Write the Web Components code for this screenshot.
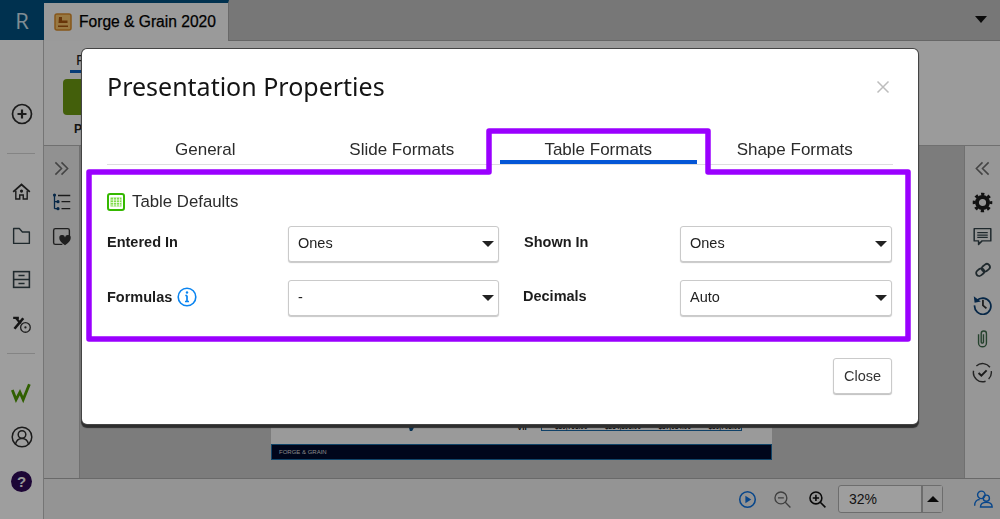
<!DOCTYPE html>
<html lang="en">
<head>
<meta charset="utf-8">
<title>Presentation Properties</title>
<style>
  html, body { margin: 0; height: 100%; overflow: hidden; }
  body { font-family: "Liberation Sans", Arial, sans-serif; }
</style>
</head>
<body>
<app-shell>
  <side-rail slot="rail">
    <app-icon name="plus" size="24"></app-icon>
    <rail-sep></rail-sep>
    <app-icon name="home"></app-icon>
    <app-icon name="folder"></app-icon>
    <app-icon name="archive"></app-icon>
    <app-icon name="percent"></app-icon>
    <rail-sep class="second"></rail-sep>
    <app-icon name="wmark"></app-icon>
    <app-icon name="user" size="24"></app-icon>
    <app-icon name="help"></app-icon>
  </side-rail>
  <tool-panel slot="left">
    <app-icon name="chevrons-right" tight></app-icon>
    <app-icon name="outline" tight></app-icon>
    <app-icon name="heartnote" tight></app-icon>
  </tool-panel>
  <tool-panel slot="right">
    <app-icon name="chevrons-left" tight></app-icon>
    <app-icon name="gear" tight></app-icon>
    <app-icon name="comment" tight></app-icon>
    <app-icon name="link" size="18" tight></app-icon>
    <app-icon name="history" tight></app-icon>
    <app-icon name="clip" tight></app-icon>
    <app-icon name="check" tight></app-icon>
  </tool-panel>
</app-shell>
<props-dialog>
  <dialog-tab-item>General</dialog-tab-item>
  <dialog-tab-item>Slide Formats</dialog-tab-item>
  <dialog-tab-item active>Table Formats</dialog-tab-item>
  <dialog-tab-item>Shape Formats</dialog-tab-item>
</props-dialog>

<script>
const ICONS = {
  plus: '<circle cx="12" cy="12" r="9.5" fill="none" stroke="#2c2c2c" stroke-width="1.7"/><path d="M12 7.5v9M7.5 12h9" stroke="#2c2c2c" stroke-width="2.2"/>',
  home: '<path d="M2.5 12.5 12 4l9.5 8.5" fill="none" stroke="#2c2c2c" stroke-width="2"/><path d="M5.5 11v9.5H10V16h4v4.500h4.500V11" fill="none" stroke="#2c2c2c" stroke-width="1.6"/><circle cx="12" cy="11.5" r="1.8" fill="#2c2c2c"/>',
  folder: '<path d="M3 4h6.500l3.500 4h8V21H3z" fill="none" stroke="#33434a" stroke-width="1.6" stroke-linejoin="round"/>',
  archive: '<rect x="3" y="3" width="18" height="18" fill="none" stroke="#33434a" stroke-width="1.8"/><path d="M3 12h18M8.500 7.500h7M8.500 16.500h7" stroke="#33434a" stroke-width="1.8"/>',
  percent: '<path d="M4 18 14 6" stroke="#222" stroke-width="3"/><path d="M2.500 5.500h6.500M6 6l5 6" stroke="#222" stroke-width="2.6"/><circle cx="16.500" cy="16.500" r="5.500" fill="none" stroke="#333" stroke-width="1.5"/><circle cx="16.500" cy="16.500" r="1.300" fill="#333"/>',
  wmark: '<path d="M1.500 8 5.800 19 10.200 10.500 13.900 19 21 1.500" fill="none" stroke="#4e9a00" stroke-width="3.2" stroke-linejoin="miter"/>',
  user: '<circle cx="12" cy="12" r="9.800" fill="none" stroke="#2c2c2c" stroke-width="1.500"/><circle cx="12" cy="9.500" r="3.800" fill="none" stroke="#2c2c2c" stroke-width="1.500"/><path d="M5.500 19c1-4 3.500-5.500 6.500-5.500s5.500 1.500 6.500 5.500" fill="none" stroke="#2c2c2c" stroke-width="1.500"/>',
  'chevrons-right': '<path d="M5 5l7 7-7 7M12 5l7 7-7 7" fill="none" stroke="#6e6e6e" stroke-width="1.800"/>',
  'chevrons-left': '<path d="M12 5l-7 7 7 7M19 5l-7 7 7 7" fill="none" stroke="#6e6e6e" stroke-width="1.800"/>',
  outline: '<path d="M4 3v16M4 11h4M4 19h4" fill="none" stroke="#0b3f73" stroke-width="1.500"/><circle cx="4" cy="3.500" r="1.800" fill="#0b3f73"/><circle cx="8" cy="11" r="1.800" fill="#0b3f73"/><circle cx="8" cy="19" r="1.800" fill="#0b3f73"/><path d="M8 4h14M12 11h10M12 19h10" stroke="#2c2c2c" stroke-width="1.500"/>',
  heartnote: '<path d="M13 21H5a2 2 0 0 1-2-2V5a2 2 0 0 1 2-2h14a2 2 0 0 1 2 2v8" fill="none" stroke="#333" stroke-width="1.600"/><path d="M16 22c-4-3-6.500-5-6.500-8a3.200 3.200 0 0 1 6.500-1 3.200 3.200 0 0 1 6.500 1c0 3-2.500 5-6.500 8z" fill="#333"/>',
  gear: '<circle cx="12" cy="12" r="6.300" fill="none" stroke="#1d1d1d" stroke-width="4.400"/><circle cx="12" cy="12" r="9.500" fill="none" stroke="#1d1d1d" stroke-width="3.400" stroke-dasharray="3.700 3.760" stroke-dashoffset="1.850"/>',
  comment: '<path d="M2.500 3h19v14h-10l-4 4v-4h-5z" fill="none" stroke="#33434a" stroke-width="1.700" stroke-linejoin="round"/><path d="M6 7.500h12M6 10.300h12M6 13.100h12" stroke="#33434a" stroke-width="1.400"/>',
  link: '<g fill="none" stroke="#33434a" stroke-width="2.400" transform="rotate(-38 12 12)"><rect x="1.500" y="8" width="11.500" height="8" rx="4"/><rect x="11" y="8" width="11.500" height="8" rx="4"/></g>',
  history: '<path d="M5.500 7.500A9.300 9.300 0 1 1 3 13" fill="none" stroke="#0b3f73" stroke-width="2"/><path d="M2 2.500 3 10l7-1.500z" fill="#0b3f73"/><path d="M12.500 6.500v6.500l4 3.500" fill="none" stroke="#2c2c2c" stroke-width="2"/>',
  clip: '<path d="M7.500 7v10a4.500 4.500 0 0 0 9 0V6.500a3 3 0 0 0-6 0V16a1.300 1.300 0 0 0 2.600 0V7" fill="none" stroke="#3d6b4a" stroke-width="1.600"/>',
  check: '<path d="M5 4.500a10.500 10.500 0 0 1 15.500 1.500M22 10.500a10.500 10.500 0 0 1-3 9M15.500 22A10.500 10.500 0 0 1 1.800 10" fill="none" stroke="#3a3a3a" stroke-width="1.600"/><path d="M7.500 12.500l3.200 3 6-6" fill="none" stroke="#2c2c2c" stroke-width="2.200"/>',
  play: '<circle cx="12" cy="12" r="9.800" fill="none" stroke="#0e72e0" stroke-width="2"/><path d="M9.300 7.200v9.600l7.400-4.800z" fill="#0e72e0"/>',
  'zoom-out': '<circle cx="10" cy="10" r="7.500" fill="none" stroke="#666" stroke-width="1.700"/><path d="M6.300 10h7.400M15.500 15.500 22 22" stroke="#666" stroke-width="1.700"/>',
  'zoom-in': '<circle cx="10" cy="10" r="7.500" fill="none" stroke="#111" stroke-width="2"/><path d="M6 10h8M10 6v8M15.500 15.500 22 22" stroke="#111" stroke-width="2"/>',
  users: '<circle cx="10" cy="7" r="4.500" fill="none" stroke="#0e72e0" stroke-width="1.700"/><path d="M2 20c0-5 3-7.500 6-7.500" fill="none" stroke="#0e72e0" stroke-width="1.700"/><circle cx="16" cy="11" r="3.700" fill="none" stroke="#0e72e0" stroke-width="1.700"/><path d="M9 21.500c0-3.500 3-5.500 7-5.500s7 2 7 5.500z" fill="none" stroke="#0e72e0" stroke-width="1.700"/>'
};

class AppIcon extends HTMLElement {
  constructor() {
    super();
    this.attachShadow({ mode: 'open' });
  }
  connectedCallback() {
    const name = this.getAttribute('name');
    const size = this.getAttribute('size') || 21;
    const tight = this.hasAttribute('tight');
    let art = `<svg viewBox="0 0 24 24" width="${size}" height="${size}">${ICONS[name] || ''}</svg>`;
    if (name === 'help') {
      art = '<span class="help">?</span>';
    }
    this.shadowRoot.innerHTML = `
      <style>
        :host { display: flex; align-items: center; justify-content: center; height: ${tight ? 34 : 44}px; }
        svg { display: block; }
        .help { width: 21px; height: 21px; border-radius: 50%; background: #300a58; color: #f4f4f4;
          font: bold 15px/21px "Liberation Sans", Arial, sans-serif; text-align: center; }
      </style>
      ${art}`;
  }
}
customElements.define('app-icon', AppIcon);

class RailSep extends HTMLElement {
  constructor() {
    super();
    this.attachShadow({ mode: 'open' });
    this.shadowRoot.innerHTML = `
      <style>
        :host { display: block; height: 1px; margin: 17px 8px 15px 7px; background: #d6d6d6; }
        :host(.second) { margin: 8px 8px 17px 7px; }
      </style>`;
  }
}
customElements.define('rail-sep', RailSep);

class SideRail extends HTMLElement {
  constructor() {
    super();
    this.attachShadow({ mode: 'open' });
    this.shadowRoot.innerHTML = `
      <style>
        :host { display: block; box-sizing: border-box; width: 44px; padding-top: 52px; background: #fff; border-right: 1px solid #bdbdbd; }
      </style>
      <slot></slot>`;
  }
}
customElements.define('side-rail', SideRail);

class ToolPanel extends HTMLElement {
  constructor() {
    super();
    this.attachShadow({ mode: 'open' });
    this.shadowRoot.innerHTML = `
      <style>
        :host { display: block; box-sizing: border-box; width: 36px; padding-top: 5px; background: #ebebeb; border-right: 1px solid #b5b5b5; }
        :host([slot="right"]) { background: #f4f4f4; border-right: 0; border-left: 1px solid #b5b5b5; }
      </style>
      <slot></slot>`;
  }
}
customElements.define('tool-panel', ToolPanel);

class SlidePreview extends HTMLElement {
  constructor() {
    super();
    this.attachShadow({ mode: 'open' });
    this.shadowRoot.innerHTML = `
      <style>
        :host { display: flex; flex-direction: column; justify-content: flex-end; box-sizing: border-box; width: 501px; height: 282px; background: #f8f8f8; }
        .row { display: flex; align-items: flex-end; height: 8px; margin-bottom: 13px; font: bold 6.5px "Liberation Sans", Arial, sans-serif; color: #111; }
        .mark { width: 22px; height: 8px; margin-left: 129px; background: #0b4f86; clip-path: polygon(0 0, 100% 0, 65% 50%, 55% 100%, 45% 100%, 40% 50%); }
        .vii { margin-left: 95px; width: 24px; font-size: 8px; line-height: 7px; }
        .cells { display: flex; justify-content: space-between; box-sizing: border-box; width: 201px; height: 8px; padding-left: 13px; border: 1px solid #1a6aa8; border-top: 0; line-height: 7px; }
        .foot { box-sizing: border-box; height: 16px; padding-left: 7px; background: #000a2c; border: 1px solid #1b6ea8; color: #ddd; font: 6px/14px "Liberation Sans", Arial, sans-serif; }
      </style>
      <div class="row">
        <div class="mark"></div><div class="vii">VII</div>
        <div class="cells"><span>$89,763.00</span><span>$234,895.00</span><span>$87,984.00</span><span>$89,708.00</span></div>
      </div>
      <div class="foot">FORGE &amp; GRAIN</div>`;
  }
}
customElements.define('slide-preview', SlidePreview);

class AppShell extends HTMLElement {
  constructor() {
    super();
    this.attachShadow({ mode: 'open' });
    this.shadowRoot.innerHTML = `
      <style>
        :host { display: grid; grid-template-columns: 44px 1fr; grid-template-rows: 40px 1fr; width: 1000px; height: 519px; }
        .top { grid-column: 1 / 3; display: flex; background: #c0c0c0; }
        .brand { width: 44px; background: #005080; color: #cfe3ee; font: 22px/40px "Open Sans", sans-serif; text-align: center; }
        .tab { display: flex; align-items: center; gap: 7px; box-sizing: border-box; width: 185px; height: 41px; padding-left: 10px; background: #f8f8f8; border-top: 3px solid #005080; border-right: 1px solid #aaa; position: relative; color: #000; font: 15.6px "Liberation Sans", Arial, sans-serif; -webkit-text-stroke: .25px #000; }
        .caret { margin: 16px 13px 0 auto; width: 0; height: 0; border: 6px solid transparent; border-top: 7px solid #111; border-bottom: 0; }
        .main { display: flex; flex-direction: column; min-width: 0; }
        .ribbon { height: 106px; box-sizing: border-box; padding: 10px 0 0 19px; background: #fbfbfb; border-top: 1px solid #a5a5a5; border-bottom: 1px solid #b5b5b5; color: #222; font: 14px "Liberation Sans", Arial, sans-serif; }
        .ribbon .f { display: inline-block; padding: 0 1px 2px 6px; margin-left: 7px; border-bottom: 3px solid #0b5fc0; font-size: 15px; }
        .ribbon .btn { display: block; width: 38px; height: 36px; margin-top: 6px; background: #6c9a12; border-radius: 4px; }
        .ribbon .p { display: block; margin: 7px 0 0 11px; font-size: 12px; font-weight: bold; }
        .work { flex: 1; display: flex; min-height: 0; }
        .canvas { flex: 1; display: flex; align-items: flex-end; padding: 0 0 18px 191px; background: #c8c8c8; overflow: hidden; }
        .status { display: flex; align-items: center; box-sizing: border-box; height: 41px; padding-left: 686px; background: #efefef; border-top: 1px solid #aaa; }
        .status app-icon { width: 35px; height: auto; }
        .zoom { display: flex; margin-left: 3px; height: 28px; box-sizing: border-box; border: 1px solid #b0b0b0; border-radius: 3px; background: #fff; width: 105px; font: 14px/26px "Liberation Sans", Arial, sans-serif; color: #222; }
        .zoom .val { flex: 1; padding-left: 10px; border-right: 2px solid #b0b0b0; }
        .zoom .up { width: 19px; display: flex; align-items: center; justify-content: center; background: #f4f4f4; }
        .zoom .up i { width: 0; height: 0; border: 6px solid transparent; border-bottom: 6px solid #111; border-top: 0; }
        .status .who { margin-left: 22px; }
      </style>
      <div class="top">
        <div class="brand">R</div>
        <div class="tab">
          <svg width="18" height="18" viewBox="0 0 18 18">
            <rect x="1" y="1" width="16" height="16" rx="2" fill="#f5c26b" stroke="#d98b2a" stroke-width="1.5"/>
            <path d="M5 4h3v3.5h5.500V10H4.500zM4 12.500h10V14H4z" fill="#a8560f"/>
          </svg>
          Forge &amp; Grain 2020
        </div>
        <div class="caret"></div>
      </div>
      <slot name="rail"></slot>
      <div class="main">
        <div class="ribbon">
          <span class="f">F</span>
          <span class="btn"></span>
          <span class="p">P</span>
        </div>
        <div class="work">
          <slot name="left"></slot>
          <div class="canvas"><slide-preview></slide-preview></div>
          <slot name="right"></slot>
        </div>
        <div class="status">
          <app-icon name="play" size="19"></app-icon>
          <app-icon name="zoom-out" size="19"></app-icon>
          <app-icon name="zoom-in" size="19"></app-icon>
          <div class="zoom"><div class="val">32%</div><div class="up"><i></i></div></div>
          <app-icon class="who" name="users" size="20"></app-icon>
        </div>
      </div>`;
  }
}
customElements.define('app-shell', AppShell);

class DialogTabItem extends HTMLElement {
  constructor() {
    super();
    this.attachShadow({ mode: 'open' });
    this.shadowRoot.innerHTML = `
      <style>
        :host { display: block; text-align: center; font: 17px/40px "Liberation Sans", Arial, sans-serif; color: #2b2b2b; position: relative; }
        :host([active])::after { content: ""; position: absolute; left: 0; right: 0; top: 30px; height: 3.5px; background: #0456d6; }
      </style>
      <slot></slot>`;
  }
}
customElements.define('dialog-tab-item', DialogTabItem);

class FieldSelect extends HTMLElement {
  constructor() {
    super();
    this.attachShadow({ mode: 'open' });
    this.shadowRoot.innerHTML = `
      <style>
        :host { display: flex; align-items: center; justify-content: space-between; box-sizing: border-box; height: 36px; padding: 0 4px 2px 9px; background: #fff; border: 1px solid #cacaca; border-radius: 3px; box-shadow: 0 1px 1px #c8c8c8; font: 14.5px "Liberation Sans", Arial, sans-serif; color: #222; }
        i { width: 0; height: 0; margin-top: 2px; border: 6px solid transparent; border-top: 6px solid #222; border-bottom: 0; }
      </style>
      <span><slot></slot></span><i></i>`;
  }
}
customElements.define('field-select', FieldSelect);

class PropsDialog extends HTMLElement {
  constructor() {
    super();
    this.attachShadow({ mode: 'open' });
    this.shadowRoot.innerHTML = `
      <style>
        :host { position: fixed; inset: 0; display: block; background: rgba(0,0,0,.38); }
        .box { position: absolute; left: 82px; top: 49px; box-sizing: border-box; width: 836px; height: 375px; padding: 20px 25px 0; background: #fff; border-radius: 5px; box-shadow: 0 0 0 1px #444, 0 3px 1px 1px #2e2e2e; font-family: "Liberation Sans", Arial, sans-serif; }
        .title { font: 25px/34px "Noto Sans", sans-serif; color: #141414; }
        .close { position: absolute; top: 31px; right: 28px; }
        .tabs { display: grid; grid-template-columns: repeat(4, 1fr); height: 34px; margin-top: 27px; border-bottom: 1px solid #dedede; width: 786px; }
        .head { display: flex; align-items: center; gap: 7px; height: 20px; margin-top: 27px; font-size: 16.8px; color: #2b2b2b; }
        .form { display: grid; grid-template-columns: 181px 211px 181px 212px; grid-auto-rows: 36px; row-gap: 18px; margin-top: 14px; }
        .lab { display: flex; align-items: center; gap: 5px; padding-bottom: 4px; font-size: 14.5px; font-weight: bold; color: #1c1c1c; }
        .lab.in { padding-left: 25px; }
        .lab.in2 { padding-left: 24px; }
        .lab.fx { padding-bottom: 2px; }
        .foot { display: flex; justify-content: flex-end; margin: 42px 1px 0 0; }
        .btn { box-sizing: border-box; width: 59px; height: 36px; background: #fff; border: 1px solid #cacaca; border-radius: 3px; box-shadow: 0 1px 1px #c0c0c0; font: 14.5px/34px "Liberation Sans", Arial, sans-serif; color: #333; text-align: center; }
        .mark { position: absolute; left: 0; top: 0; pointer-events: none; }
      </style>
      <div class="box">
        <div class="title">Presentation Properties</div>
        <svg class="close" width="14" height="14" viewBox="0 0 14 14"><path d="M1.500 1.500l11 11M12.500 1.500l-11 11" stroke="#bdbdbd" stroke-width="1.500"/></svg>
        <div class="tabs"><slot></slot></div>
        <div class="head">
          <svg width="18" height="18" viewBox="0 0 18 18">
            <rect x="1" y="1" width="16" height="16" rx="2" fill="#fff" stroke="#35b800" stroke-width="2"/>
            <path d="M3.500 4.500h11v9h-11z" fill="#7fdc4a"/>
            <path d="M3.500 7h11M3.500 9.500h11M3.500 12h11M6.500 4.500v9M9.500 4.500v9M12.500 4.500v9" stroke="#fff" stroke-width=".7"/>
          </svg>
          Table Defaults
        </div>
        <div class="form">
          <div class="lab">Entered In</div>
          <field-select>Ones</field-select>
          <div class="lab in">Shown In</div>
          <field-select>Ones</field-select>
          <div class="lab fx">Formulas
            <svg width="20" height="20" viewBox="0 0 20 20"><circle cx="10" cy="10" r="8.800" fill="none" stroke="#0a84f0" stroke-width="1.600"/><path d="M10 8.500v6M8 14.500h4M8.300 8.500H10" stroke="#0a84f0" stroke-width="1.700"/><circle cx="10" cy="5.500" r="1.200" fill="#0a84f0"/></svg>
          </div>
          <field-select>-</field-select>
          <div class="lab in2">Decimals</div>
          <field-select>Auto</field-select>
        </div>
        <div class="foot"><div class="btn">Close</div></div>
        <svg class="mark" width="836" height="375" viewBox="0 0 836 375">
          <path d="M7 123H407V82H626V123H826V290H7Z" fill="none" stroke="#9a00ff" stroke-width="5.500" stroke-linejoin="round"/>
        </svg>
      </div>`;
  }
}
customElements.define('props-dialog', PropsDialog);
</script>
</body>
</html>
